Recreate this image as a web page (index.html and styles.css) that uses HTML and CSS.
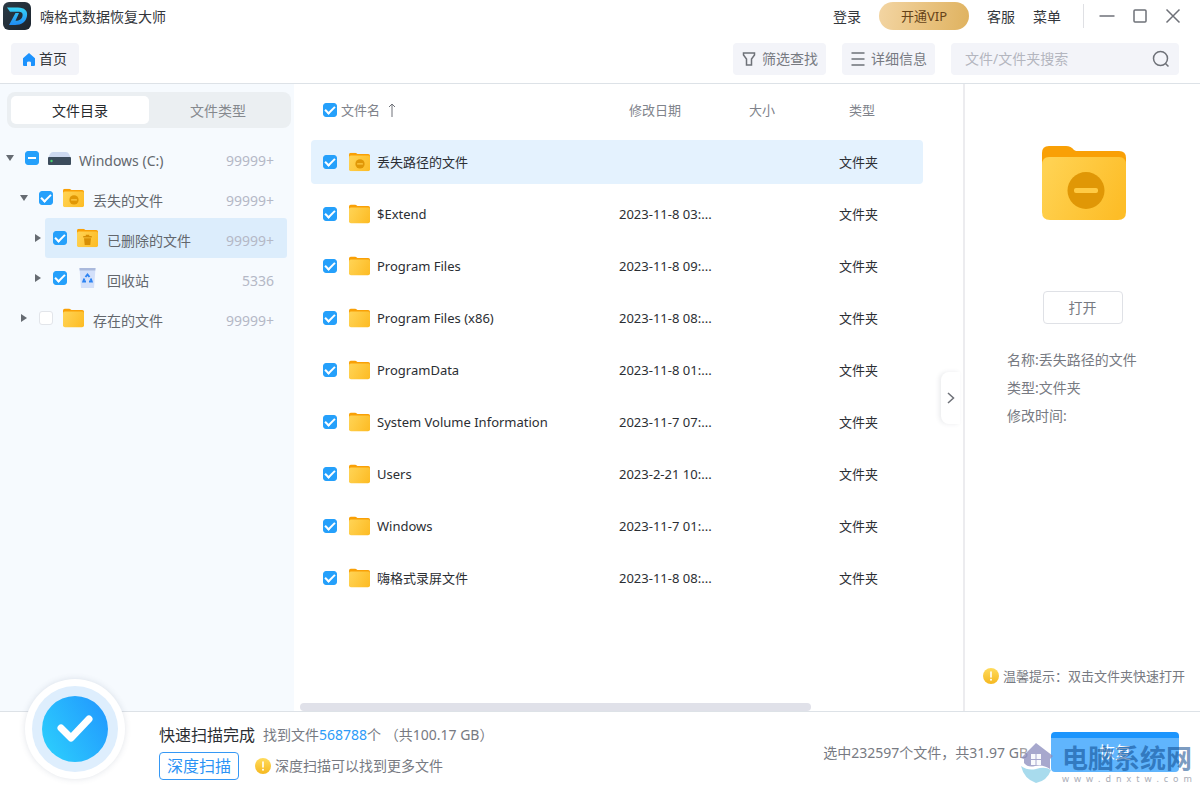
FILE: index.html
```html
<!DOCTYPE html>
<html lang="zh-CN">
<head>
<meta charset="utf-8">
<meta name="viewport" content="width=device-width, initial-scale=1">
<title>嗨格式数据恢复大师</title>
<link rel="stylesheet" href="styles.css">
</head>
<body>
<svg class="defs" width="0" height="0" aria-hidden="true">
  <defs>
    <linearGradient id="front" x1="0" y1="0.3" x2="1" y2="0.7">
      <stop offset="0" stop-color="#ffd252"/><stop offset="1" stop-color="#fdbd27"/>
    </linearGradient>
    <linearGradient id="logoBg" x1="0" y1="0" x2="1" y2="1">
      <stop offset="0" stop-color="#2c3b46"/><stop offset="1" stop-color="#1b242e"/>
    </linearGradient>
    <linearGradient id="logoD" x1="0" y1="0" x2="0" y2="1">
      <stop offset="0" stop-color="#37d3f5"/><stop offset="1" stop-color="#1f8cf5"/>
    </linearGradient>
    <linearGradient id="tip" x1="0" y1="0" x2="0" y2="1">
      <stop offset="0" stop-color="#ffdb5c"/><stop offset="1" stop-color="#f5b820"/>
    </linearGradient>
    <symbol id="folder" viewBox="0 0 84 74">
      <path d="M0 7Q0 0 7 0H24Q29 0 32 4L34 5H77Q84 5 84 12V40H0Z" fill="#f9a006"/>
      <path d="M0 19Q0 11 7 11H77Q84 11 84 19V66Q84 74 76 74H8Q0 74 0 66Z" fill="url(#front)"/>
    </symbol>
    <symbol id="folder-lost" viewBox="0 0 84 74">
      <use href="#folder" width="84" height="74"/>
      <circle cx="44" cy="44.500" r="18.500" fill="#e09706"/>
      <rect x="32" y="42" width="24" height="5" rx="2" fill="#ffcb45"/>
    </symbol>
    <symbol id="folder-trash" viewBox="0 0 84 74">
      <use href="#folder" width="84" height="74"/>
      <path d="M25 29H35V24H49V29H59V35H25ZM28 38H56L53 65H31Z" fill="#d68e06"/>
    </symbol>
    <symbol id="alert" viewBox="0 0 16 16">
      <circle cx="8" cy="8" r="8" fill="url(#tip)"/>
      <path d="M8 4V9" stroke="#fff" stroke-width="1.600" stroke-linecap="round"/>
      <circle cx="8" cy="11.800" r="1" fill="#fff"/>
    </symbol>
  </defs>
</svg>

<header>
  <div class="titlebar">
    <svg class="logo" viewBox="0 0 28 28" aria-hidden="true">
      <rect width="28" height="28" rx="6" fill="url(#logoBg)"/>
      <path d="M4 5.500H15C21.500 5.500 25 9 24 14C23 20 18.500 23 12 23H6L12.500 11H16L12.500 18.800C16.500 18.800 19 17 19.500 14C20 11 18.500 9.800 15 9.800H7Z" fill="url(#logoD)"/>
    </svg>
    <h1 class="app-name">嗨格式数据恢复大师</h1>
    <nav class="account">
      <a class="link login" href="#">登录</a>
      <button class="vip" type="button">开通VIP</button>
      <a class="link" href="#">客服</a>
      <a class="link" href="#">菜单</a>
    </nav>
    <div class="window-buttons">
      <button class="icon-button" type="button" aria-label="最小化"><svg viewBox="0 0 16 16"><path d="M.5 8H15.500"/></svg></button>
      <button class="icon-button" type="button" aria-label="最大化"><svg viewBox="0 0 16 16"><rect x="2" y="2" width="12" height="12" rx="1"/></svg></button>
      <button class="icon-button" type="button" aria-label="关闭"><svg viewBox="0 0 16 16"><path d="M1.500 1.500L14.500 14.500M14.500 1.500L1.500 14.500"/></svg></button>
    </div>
  </div>
  <div class="toolbar">
    <button class="tool home" type="button">
      <svg class="home-icon" viewBox="0 0 12 13" aria-hidden="true"><path d="M6 0L12 5.200V12Q12 13 11 13H8V9.500Q8 8.500 6 8.500T4 9.500V13H1Q0 13 0 12V5.200Z" fill="#1c92fd"/></svg>
      首页
    </button>
    <button class="tool filter" type="button">
      <svg class="tool-icon" viewBox="0 0 16 16" aria-hidden="true"><path d="M2.500 2H13.500V4L10.500 8V14H5.500V8L2.500 4Z"/></svg>
      筛选查找
    </button>
    <button class="tool" type="button">
      <svg class="tool-icon" viewBox="0 0 16 16" aria-hidden="true"><path d="M1.500 2H14.500M1.500 8H14.500M1.500 14H14.500"/></svg>
      详细信息
    </button>
    <div class="search">
      <input class="search-input" type="text" placeholder="文件/文件夹搜索" aria-label="文件/文件夹搜索">
      <button class="search-button" type="button" aria-label="搜索"><svg viewBox="0 0 18 18"><circle cx="8.500" cy="8.500" r="7"/><path d="M13.500 13.500L16.500 16.500"/></svg></button>
    </div>
  </div>
</header>

<main class="workspace">
  <aside class="sidebar">
    <div class="tabs" role="tablist">
      <button class="tab active" type="button" role="tab" aria-selected="true">文件目录</button>
      <button class="tab" type="button" role="tab" aria-selected="false">文件类型</button>
    </div>
    <ul class="tree">
      <li class="node">
        <button class="arrow open" type="button" aria-label="收起"></button>
        <label class="node-body"><input class="check partial" type="checkbox">
          <svg class="node-icon disk" viewBox="0 0 23 13" aria-hidden="true"><path d="M5 0H18Q20 0 21 2L23 6H0L2 2Q3 0 5 0Z" fill="#cdd9f0"/><rect y="5" width="23" height="8" rx="1" fill="#3c4c5c"/><circle cx="3.500" cy="9" r="1.200" fill="#45d36c"/></svg>
          <span class="node-name">Windows (C:)</span><span class="count">99999+</span></label>
      </li>
      <li class="node level-1">
        <button class="arrow open" type="button" aria-label="收起"></button>
        <label class="node-body"><input class="check" type="checkbox" checked>
          <svg class="node-icon" aria-hidden="true"><use href="#folder-lost"/></svg>
          <span class="node-name">丢失的文件</span><span class="count">99999+</span></label>
      </li>
      <li class="node level-2">
        <button class="arrow" type="button" aria-label="展开"></button>
        <label class="node-body selected"><input class="check" type="checkbox" checked>
          <svg class="node-icon" aria-hidden="true"><use href="#folder-trash"/></svg>
          <span class="node-name">已删除的文件</span><span class="count">99999+</span></label>
      </li>
      <li class="node level-2">
        <button class="arrow" type="button" aria-label="展开"></button>
        <label class="node-body"><input class="check" type="checkbox" checked>
          <svg class="node-icon" viewBox="0 0 20 20" aria-hidden="true"><path d="M2 0H18L16.500 20H3.500Z" fill="#d3e0fa"/><path d="M2 0H18L17.800 2.500H2.200Z" fill="#aab9dc"/><g fill="none" stroke="#2d83f2" stroke-width="2"><path d="M8 9L10 6.500L12 9M13.200 10.500L14.200 13.500H11.500M8.500 13.500H5.800L6.800 10.500"/></g></svg>
          <span class="node-name">回收站</span><span class="count">5336</span></label>
      </li>
      <li class="node level-1">
        <button class="arrow" type="button" aria-label="展开"></button>
        <label class="node-body"><input class="check" type="checkbox">
          <svg class="node-icon" aria-hidden="true"><use href="#folder"/></svg>
          <span class="node-name">存在的文件</span><span class="count">99999+</span></label>
      </li>
    </ul>
  </aside>

  <section class="files">
    <table class="file-table">
      <thead>
        <tr>
          <th class="col-name"><label class="head-name"><input class="check" type="checkbox" checked>文件名
            <svg class="sort" viewBox="0 0 8 14" aria-hidden="true"><path d="M4 14V1M1 4L4 1L7 4"/></svg></label></th>
          <th class="col-date">修改日期</th><th class="col-size">大小</th><th class="col-type">类型</th>
        </tr>
      </thead>
      <tbody>
        <tr class="selected"><td><label class="file"><input class="check" type="checkbox" checked><svg class="file-icon" aria-hidden="true"><use href="#folder-lost"/></svg>丢失路径的文件</label></td><td></td><td></td><td>文件夹</td></tr>
        <tr><td><label class="file"><input class="check" type="checkbox" checked><svg class="file-icon" aria-hidden="true"><use href="#folder"/></svg>$Extend</label></td><td>2023-11-8 03:...</td><td></td><td>文件夹</td></tr>
        <tr><td><label class="file"><input class="check" type="checkbox" checked><svg class="file-icon" aria-hidden="true"><use href="#folder"/></svg>Program Files</label></td><td>2023-11-8 09:...</td><td></td><td>文件夹</td></tr>
        <tr><td><label class="file"><input class="check" type="checkbox" checked><svg class="file-icon" aria-hidden="true"><use href="#folder"/></svg>Program Files (x86)</label></td><td>2023-11-8 08:...</td><td></td><td>文件夹</td></tr>
        <tr><td><label class="file"><input class="check" type="checkbox" checked><svg class="file-icon" aria-hidden="true"><use href="#folder"/></svg>ProgramData</label></td><td>2023-11-8 01:...</td><td></td><td>文件夹</td></tr>
        <tr><td><label class="file"><input class="check" type="checkbox" checked><svg class="file-icon" aria-hidden="true"><use href="#folder"/></svg>System Volume Information</label></td><td>2023-11-7 07:...</td><td></td><td>文件夹</td></tr>
        <tr><td><label class="file"><input class="check" type="checkbox" checked><svg class="file-icon" aria-hidden="true"><use href="#folder"/></svg>Users</label></td><td>2023-2-21 10:...</td><td></td><td>文件夹</td></tr>
        <tr><td><label class="file"><input class="check" type="checkbox" checked><svg class="file-icon" aria-hidden="true"><use href="#folder"/></svg>Windows</label></td><td>2023-11-7 01:...</td><td></td><td>文件夹</td></tr>
        <tr><td><label class="file"><input class="check" type="checkbox" checked><svg class="file-icon" aria-hidden="true"><use href="#folder"/></svg>嗨格式录屏文件</label></td><td>2023-11-8 08:...</td><td></td><td>文件夹</td></tr>
      </tbody>
    </table>
    <div class="scrollbar"><div class="thumb"></div></div>
    <button class="collapse" type="button" aria-label="收起预览"><svg viewBox="0 0 8 12"><path d="M1 1L6.500 6L1 11"/></svg></button>
  </section>

  <aside class="preview">
    <svg class="preview-icon" aria-hidden="true"><use href="#folder-lost"/></svg>
    <button class="open-button" type="button">打开</button>
    <div class="details">
      <p>名称:丢失路径的文件</p>
      <p>类型:文件夹</p>
      <p>修改时间:</p>
    </div>
    <p class="hint"><svg class="alert" aria-hidden="true"><use href="#alert"/></svg>温馨提示：双击文件夹快速打开</p>
  </aside>
</main>

<footer class="statusbar">
  <div class="done">
    <svg viewBox="0 0 100 100" role="img" aria-label="完成">
      <defs><linearGradient id="doneFill" x1="0" y1="0.8" x2="1" y2="0.2"><stop offset="0" stop-color="#2ccefd"/><stop offset="1" stop-color="#2299fe"/></linearGradient></defs>
      <circle cx="50" cy="50" r="43" fill="#deeefd"/>
      <circle cx="50" cy="50" r="33" fill="url(#doneFill)"/>
      <path d="M36 49L46 59L64 40" fill="none" stroke="#fff" stroke-width="7" stroke-linecap="round" stroke-linejoin="round"/>
    </svg>
  </div>
  <div class="scan">
    <p class="scan-line"><strong class="scan-title">快速扫描完成</strong><span>找到文件<span class="found">568788</span>个 （共100.17 GB）</span></p>
    <p class="scan-line deep-line"><button class="deep" type="button">深度扫描</button><svg class="alert" aria-hidden="true"><use href="#alert"/></svg><span>深度扫描可以找到更多文件</span></p>
  </div>
  <p class="chosen">选中232597个文件，共31.97 GB</p>
  <button class="recover" type="button">恢复</button>
  <div class="watermark">
    <svg class="mark" viewBox="0 0 32 42" aria-hidden="true">
      <path d="M0 16L15 1L32 14L29 17V27Q22 22 14 24Q7 26 3 21V17Z" fill="#8a8bbd"/>
      <path d="M10 12H20V23H10Z" fill="#f6f7fc"/><path d="M15 12V23M10 17.500H20" stroke="#8a8bbd" stroke-width="1"/>
      <path d="M0 24Q7 29 15 27Q24 24 30 28Q26 39 15 41Q3 37 0 24Z" fill="#8cd0e8"/>
    </svg>
    <div class="mark-text">
      <span class="mark-name">电脑系统网</span>
      <span class="mark-url"><i>w</i><i>w</i><i>w</i><i>.</i><i>d</i><i>n</i><i>x</i><i>t</i><i>w</i><i>.</i><i>c</i><i>o</i><i>m</i></span>
    </div>
  </div>
</footer>
</body>
</html>
```

FILE: styles.css
```css
* { box-sizing: border-box; }

body {
  margin: 0;
  min-height: 100vh;
  display: flex;
  flex-direction: column;
  background: #fff;
  color: #33363b;
  font: 14px/20px "Noto Sans", "Noto Sans CJK SC", sans-serif;
}

p, h1, ul { margin: 0; padding: 0; }
button, input { font: inherit; color: inherit; }
button { padding: 0; border: 0; background: none; cursor: pointer; }
svg { display: block; }
.defs { position: absolute; }

/* Title bar */
.titlebar { display: flex; align-items: center; height: 34px; padding: 0 19px 2px 3px; }
.logo { width: 28px; height: 28px; }
.app-name { margin-left: 9px; padding-top: 1px; font-size: 14px; font-weight: 400; }
.account { display: flex; align-items: center; gap: 18px; margin-left: auto; }
.link { padding-top: 1px; color: #33363b; text-decoration: none; }
.vip {
  width: 90px;
  height: 28px;
  border-radius: 14px;
  background: linear-gradient(100deg, #f3d5a3, #dfb25f);
  color: #664318;
  font-size: 13px;
}
.window-buttons {
  display: flex;
  align-items: center;
  gap: 17px;
  height: 24px;
  margin-left: 22px;
  padding-left: 15px;
  border-left: 1px solid #dfe0e4;
}
.icon-button { width: 16px; height: 16px; }
.icon-button svg, .search-button svg, .tool-icon, .sort, .collapse svg {
  width: 100%;
  fill: none;
  stroke: #6e7178;
  stroke-width: 1.5;
}

/* Toolbar */
.toolbar {
  display: flex;
  align-items: center;
  gap: 16px;
  height: 50px;
  padding: 0 21px 0 11px;
  border-bottom: 1px solid #dde2e7;
}
.tool {
  display: flex;
  align-items: center;
  justify-content: center;
  gap: 5px;
  width: 93px;
  height: 32px;
  padding-top: 1px;
  border-radius: 4px;
  background: #f3f4f9;
  color: #777a82;
}
.home { width: 68px; gap: 4px; color: #33363b; }
.home-icon { width: 12px; height: 13px; }
.filter { margin-left: auto; }
.tool .tool-icon { width: 16px; height: 16px; }
.search {
  display: flex;
  align-items: center;
  width: 228px;
  height: 32px;
  padding: 0 9px 0 14px;
  border-radius: 4px;
  background: #f3f4f9;
}
.search-input { flex: 1; min-width: 0; padding: 1px 0 0; border: 0; outline: 0; background: none; }
.search-input::placeholder { color: #b4b6bf; }
.search-button { width: 18px; height: 18px; }

/* Shared controls */
.check {
  appearance: none;
  flex: none;
  display: grid;
  place-items: center;
  width: 14px;
  height: 14px;
  margin: 0;
  border: 1px solid #e2e5ea;
  border-radius: 3px;
  background: #fff;
}
.check:checked, .partial { border-color: #25a0fb; background: #25a0fb; }
.check:checked::before {
  content: "";
  width: 8px;
  height: 4px;
  margin-bottom: 2px;
  border: solid #fff;
  border-width: 0 0 2px 2px;
  transform: rotate(-45deg);
}
.partial::before { content: ""; width: 8px; height: 2px; background: #fff; }
.alert { flex: none; width: 16px; height: 16px; }

/* Work area */
.workspace { flex: 1; display: flex; }
.sidebar { flex: none; width: 294px; padding: 8px 7px 0 0; background: #f6fafe; }
.tabs {
  display: flex;
  height: 36px;
  margin: 0 -4px 0 7px;
  padding: 4px;
  border-radius: 8px;
  background: #ebeff2;
}
.tab { flex: 1; padding-top: 1px; border-radius: 5px; color: #85898e; }
.tab.active { background: #fff; color: #26292d; }

.tree { margin-top: 10px; list-style: none; }
.node { display: flex; align-items: center; gap: 2px; height: 40px; padding-left: 5px; }
.level-1 { padding-left: 19px; }
.level-2 { padding-left: 33px; }
.arrow { display: grid; place-items: center; width: 10px; height: 14px; }
.arrow::before {
  content: "";
  border: solid transparent;
  border-width: 4px 0 4px 6px;
  border-left-color: #666b72;
}
.arrow.open::before { border-width: 6px 4px 0; border-top-color: #666b72; border-left-color: transparent; }
.node-body {
  flex: 1;
  display: flex;
  align-items: center;
  height: 100%;
  padding: 0 13px 0 8px;
  border-radius: 3px;
}
.node-body.selected { background: #dcedfc; }
.node-icon { width: 21px; height: 20px; margin: 0 9px 0 10px; }
.disk { width: 23px; height: 13px; margin: 0 8px 0 9px; }
.node-name { padding-top: 5px; color: #63676d; }
.count { margin-left: auto; padding-top: 5px; color: #b4b8c6; }

/* File list */
.files { position: relative; flex: 1; display: flex; flex-direction: column; min-width: 0; }
.file-table {
  width: auto;
  margin: 0 40px 0 17px;
  border-spacing: 0 8px;
  table-layout: fixed;
  font-size: 13px;
}
.file-table th { height: 40px; padding: 0 0 4px 18px; color: #80838b; font-weight: 400; text-align: left; }
.file-table .col-name { padding-left: 12px; }
.col-date { width: 120px; }
.col-size { width: 100px; }
.col-type { width: 92px; }
.file-table td { height: 44px; padding: 0 0 0 8px; white-space: nowrap; color: #2b2e33; }
.file-table td:first-child { padding-left: 12px; border-radius: 4px 0 0 4px; }
.file-table td:last-child { border-radius: 0 4px 4px 0; }
.selected td { background: #e4f2fe; }
.head-name { display: flex; align-items: center; gap: 4px; }
.head-name .sort { width: 8px; height: 14px; margin-left: 4px; stroke-width: 1; }
.file { display: flex; align-items: center; }
.file-icon { width: 21px; height: 20px; margin: 0 7px 0 12px; }
.scrollbar { margin-top: auto; padding-left: 6px; }
.thumb { width: 77%; height: 8px; border-radius: 4px; background: #e0e1e9; }
.collapse {
  position: absolute;
  right: 3px;
  top: 288px;
  width: 19px;
  height: 52px;
  padding-left: 6px;
  border-radius: 8px 0 0 8px;
  background: #fff;
  box-shadow: -2px 0 4px rgba(60, 70, 90, 0.1);
}
.collapse svg { width: 8px; height: 12px; }

/* Preview */
.preview {
  flex: none;
  display: flex;
  flex-direction: column;
  align-items: center;
  width: 237px;
  padding: 62px 0 25px;
  border-left: 2px solid #ececef;
  color: #777a82;
}
.preview-icon { width: 84px; height: 74px; margin-left: 2px; }
.open-button { width: 80px; height: 33px; margin-top: 71px; border: 1px solid #dfe1e6; border-radius: 4px; }
.details { align-self: stretch; margin-top: 22px; padding-left: 42px; line-height: 28px; }
.hint { display: flex; align-items: center; gap: 4px; margin-top: auto; padding-left: 3px; font-size: 13px; }

/* Status bar */
.statusbar {
  position: relative;
  display: flex;
  align-items: center;
  height: 77px;
  padding: 3px 21px 0 159px;
  border-top: 1px solid #dde2e7;
  color: #777a82;
}
.done {
  position: absolute;
  left: 25px;
  bottom: 9px;
  width: 100px;
  height: 100px;
  border-radius: 50%;
  background: #fff;
  box-shadow: 0 0 6px rgba(70, 90, 120, 0.16);
}
.scan { display: grid; gap: 7px; padding-top: 2px; }
.scan-line { display: flex; align-items: center; gap: 8px; }
.scan-title { color: #2b2e33; font-size: 16px; font-weight: 400; }
.deep-line { gap: 4px; }
.deep { width: 80px; height: 28px; margin-right: 12px; border: 1px solid #3598f5; border-radius: 4px; color: #2b93f5; font-size: 16px; }
.found { color: #2b9bf8; }
.chosen { margin-left: auto; padding-top: 3px; }
.recover { width: 128px; height: 40px; margin-left: 23px; border-radius: 4px; background: #1c95fd; color: #fff; font-size: 16px; }
.watermark {
  position: absolute;
  right: 0;
  bottom: 0;
  display: flex;
  gap: 9px;
  height: 50px;
  padding: 4px 8px 0 0;
  background: rgba(255, 255, 255, 0.3);
}
.mark { width: 32px; height: 42px; opacity: 0.75; }
.mark-text { display: flex; flex-direction: column; }
.mark-name { color: rgba(10, 70, 140, 0.55); font-size: 26px; font-weight: 700; line-height: 32px; }
.mark-url { display: flex; justify-content: space-between; color: #a9adb6; font-size: 9px; line-height: 10px; }
.mark-url i { font-style: normal; }
```
